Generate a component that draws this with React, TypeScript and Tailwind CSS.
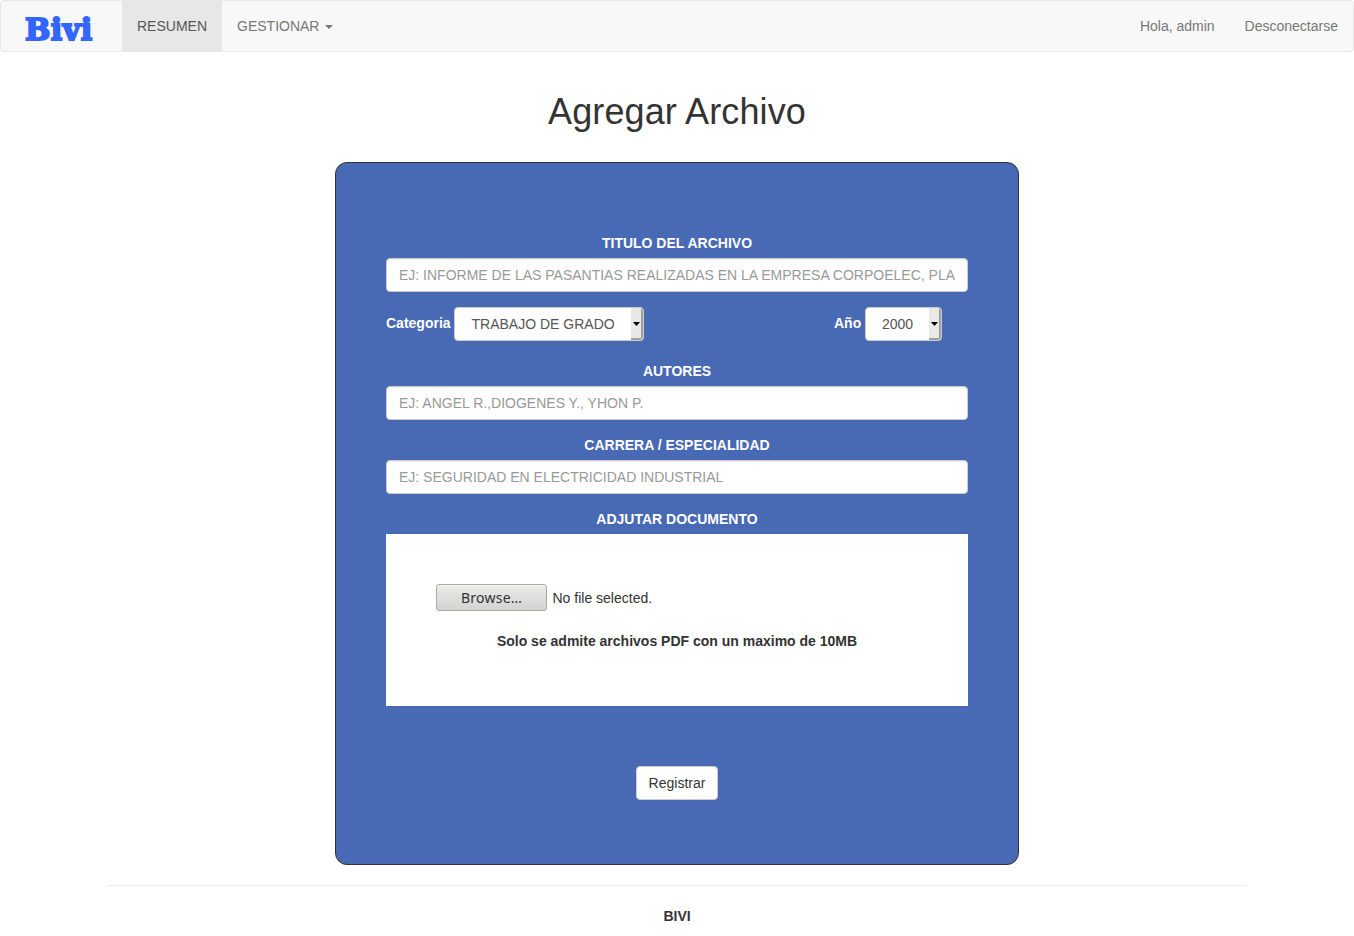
import React from "react";

const inputClass =
  "block h-[34px] w-full rounded-[4px] border border-[#cccccc] bg-white px-3 text-[14px] leading-5 text-[#555555] shadow-[inset_0_1px_1px_rgba(0,0,0,0.075)] outline-none placeholder:text-[#999999] placeholder:opacity-100";

function Field({ id, label, placeholder }: { id: string; label: string; placeholder: string }) {
  return (
    <div className="mb-[15px]">
      <label htmlFor={id} className="mb-[5px] block text-center font-bold text-white">
        {label}
      </label>
      <input id={id} type="text" placeholder={placeholder} className={inputClass} />
    </div>
  );
}

function SelectBox({ value, className }: { value: string; className: string }) {
  return (
    <button
      type="button"
      className={`flex h-[34px] overflow-hidden rounded-[4px] border border-[#cccccc] bg-white text-left text-[#555555] ${className}`}
    >
      <span className="flex-1 self-center leading-5 whitespace-nowrap">{value}</span>
      <span className="flex h-8 w-3 items-center justify-center rounded-br-[3px] border-r-2 border-b-2 border-[#a09f9d] bg-[#e8e8e7]">
        <svg width="7" height="4" viewBox="0 0 7 4" className="mt-0.5 ml-px shrink-0">
          <path d="M0 0h7L3.5 4z" fill="#000" />
        </svg>
      </span>
    </button>
  );
}

export default function App() {
  return (
    <div className="h-[936px] overflow-hidden bg-white font-['Liberation_Sans',Arial,sans-serif] text-[14px] leading-5 text-[#333333]">
      <nav className="flex h-[52px] justify-between rounded-[4px] border border-[#e7e7e7] bg-[#f8f8f8] text-[#777777]">
        <div className="flex">
          <a
            href="#"
            className="w-[121px] pt-[10px] pl-[24px] font-['DejaVu_Serif',serif] text-[30px] leading-[38px] font-bold tracking-[0.5px] text-[#3366ff] [-webkit-text-stroke:2px_#3366ff]"
          >
            Bivi
          </a>
          <a href="#" className="bg-[#e7e7e7] p-[15px] text-[#555555]">
            RESUMEN
          </a>
          <a href="#" className="flex items-start p-[15px]">
            GESTIONAR
            <svg width="8" height="4" viewBox="0 0 8 4" className="mt-[9px] ml-[6px]">
              <path d="M0 0h8L4 4z" fill="#777777" />
            </svg>
          </a>
        </div>
        <div className="flex">
          <a href="#" className="p-[15px]">
            Hola, admin
          </a>
          <a href="#" className="p-[15px]">
            Desconectarse
          </a>
        </div>
      </nav>

      <h1 className="mt-10 text-center text-[36px] leading-[40px] font-medium tracking-[0.12px]">Agregar Archivo</h1>

      <form className="mx-auto mt-[30px] h-[703px] w-[684px] rounded-[12px] border border-[#333333] bg-[#4869b4] px-[50px] pt-[70px]">
        <Field
          id="titulo"
          label="TITULO DEL ARCHIVO"
          placeholder="EJ: INFORME DE LAS PASANTIAS REALIZADAS EN LA EMPRESA CORPOELEC, PLANTA CENTRO"
        />
        <div className="mb-5 flex justify-between pr-[26px]">
          <div className="flex">
            <span className="mt-[6px] w-[68px] font-bold text-white">Categoria</span>
            <SelectBox value="TRABAJO DE GRADO" className="w-[190px] pl-[16.5px]" />
          </div>
          <div className="flex">
            <span className="mt-[6px] w-[31px] font-bold text-white">Año</span>
            <SelectBox value="2000" className="w-[77px] pl-4" />
          </div>
        </div>
        <Field id="autores" label="AUTORES" placeholder="EJ: ANGEL R.,DIOGENES Y., YHON P." />
        <Field
          id="carrera"
          label="CARRERA / ESPECIALIDAD"
          placeholder="EJ: SEGURIDAD EN ELECTRICIDAD INDUSTRIAL"
        />
        <p className="mb-[5px] text-center font-bold text-white">ADJUTAR DOCUMENTO</p>
        <div className="h-[172px] bg-white p-[50px]">
          <div className="flex items-center">
            <button
              type="button"
              className="h-[27px] w-[111px] rounded-[3px] border border-[#a9a9a5] bg-linear-to-b from-[#ebebea] to-[#d3d3d1] pt-px font-['Noto_Sans',sans-serif] text-[14px] leading-[24px] tracking-[0.25px] text-[#2e3436] shadow-[inset_0_1px_0_#f6f6f5]"
            >
              Browse…
            </button>
            <span className="mt-px ml-[5.5px]">No file selected.</span>
          </div>
          <p className="mt-5 text-center font-bold">Solo se admite archivos PDF con un maximo de 10MB</p>
        </div>
        <button
          type="button"
          className="mx-auto mt-[60px] block h-[34px] w-[82px] rounded-[4px] border border-[#cccccc] bg-white text-center"
        >
          Registrar
        </button>
      </form>

      <hr className="mx-auto mt-5 w-[1140px] border-t border-[#eeeeee]" />
      <p className="mt-5 text-center font-bold">BIVI</p>
    </div>
  );
}
